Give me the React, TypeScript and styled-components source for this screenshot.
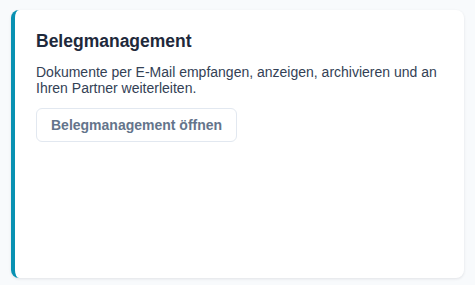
import React from "react";
import styled, { createGlobalStyle } from "styled-components";

const GlobalStyle = createGlobalStyle`
  * {
    box-sizing: border-box;
  }
  body {
    margin: 0;
    background-color: #f8fafc;
    font-family: "Liberation Sans", Arial, sans-serif;
  }
`;

const Page = styled.main`
  padding: 10px 11px;
`;

const Card = styled.section`
  height: 268px;
  background-color: #fff;
  border-left: 4px solid #0891b2;
  border-radius: 8px;
  box-shadow: 0 1px 3px rgba(15, 23, 42, 0.1);
  padding: 20px 20px 20px 21px;
  display: flex;
  flex-direction: column;
  align-items: flex-start;
`;

const Title = styled.h2`
  margin: 0 0 12px;
  font-size: 17.5px;
  line-height: 22px;
  font-weight: 700;
  color: #1e293b;
`;

const Description = styled.p`
  margin: 0 0 12px;
  font-size: 14px;
  line-height: 16px;
  color: #334155;
`;

const OpenButton = styled.button`
  font-family: inherit;
  font-size: 14px;
  line-height: 16px;
  font-weight: 700;
  color: #64748b;
  background-color: #fff;
  border: 1px solid #e2e8f0;
  border-radius: 6px;
  padding: 8px 14px;
  cursor: pointer;

  &:hover {
    background-color: #f8fafc;
  }
`;

const App: React.FC = () => {
  return (
    <>
      <GlobalStyle />
      <Page>
        <Card>
          <Title>Belegmanagement</Title>
          <Description>
            Dokumente per E-Mail empfangen, anzeigen, archivieren und an Ihren
            Partner weiterleiten.
          </Description>
          <OpenButton>Belegmanagement öffnen</OpenButton>
        </Card>
      </Page>
    </>
  );
};

export default App;
